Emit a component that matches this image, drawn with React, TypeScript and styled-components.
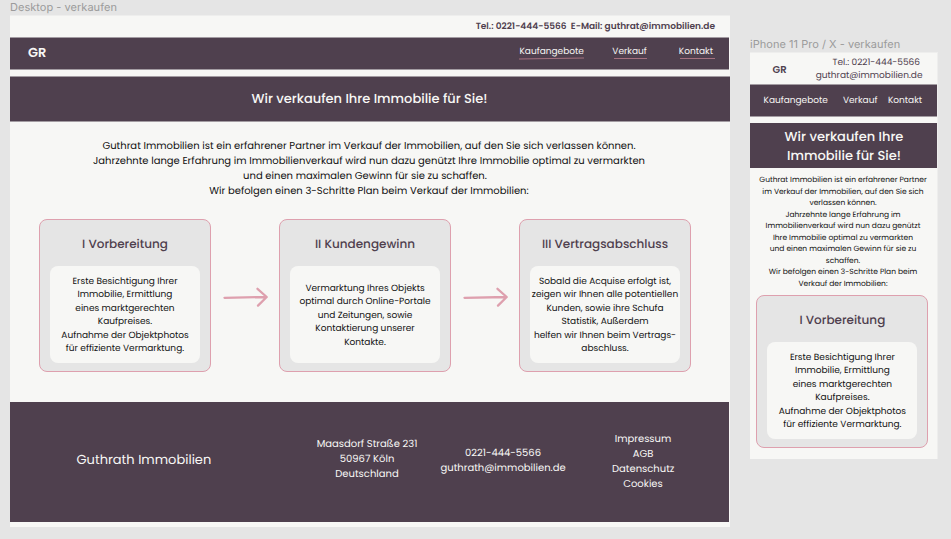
import React from 'react';
import styled, { createGlobalStyle } from 'styled-components';

const color = {
  canvas: '#e5e5e5',
  paper: '#f7f7f5',
  paperEdge: '#eeeeed',
  plum: '#4f404e',
  plumSoft: '#a39ca2',
  rose: '#dea0ae',
  roseDim: '#a3717f',
  ink: '#111111',
  label: '#9b9b9b',
};

const GlobalStyle = createGlobalStyle`
  * { box-sizing: border-box; }
  body {
    margin: 0;
    background: ${color.canvas};
    font-family: Poppins, Inter, sans-serif;
    font-size: 9px;
    line-height: 13.5px;
    color: ${color.ink};
    text-rendering: geometricPrecision;
    -webkit-font-smoothing: antialiased;
  }
`;

const Canvas = styled.div`
  display: flex;
  align-items: flex-start;
  gap: 20px;
  width: 951px;
  height: 539px;
  padding-left: 10px;
  overflow: hidden;
  background: ${color.canvas};
`;

const Artboard = styled.section<{ $width: number; $top: number }>`
  flex: none;
  width: ${(p) => p.$width}px;
  padding-top: ${(p) => p.$top}px;
`;

const ArtboardLabel = styled.div`
  height: 15px;
  font-family: Inter, sans-serif;
  font-size: 11px;
  line-height: 15px;
  letter-spacing: 0.03px;
  color: ${color.label};
  white-space: nowrap;
`;

const Frame = styled.div<{ $height: number }>`
  height: ${(p) => p.$height}px;
  border-top: 1px solid ${color.paperEdge};
  background: ${color.paper};
`;

const ContactBar = styled.div`
  height: 21px;
  padding: 5px 15px 0 0;
  text-align: right;
  font-weight: 600;
  color: ${color.plum};
  white-space: pre;
`;

const NavBar = styled.nav`
  display: flex;
  align-items: center;
  width: 719px;
  height: 33px;
  padding-left: 18px;
  border: solid ${color.plumSoft};
  border-width: 1px 0;
  background: ${color.plum};
  color: ${color.paper};
`;

const Logo = styled.div<{ $size: number; $raise?: number }>`
  padding-bottom: ${(p) => p.$raise ?? 0}px;
  font-size: ${(p) => p.$size}px;
  line-height: 1.5;
  font-weight: 600;
`;

const NavLinks = styled.div`
  display: flex;
  gap: 28.5px;
  margin: 0 6px 1px auto;
`;

const NavLink = styled.a<{ $gapAfter?: number }>`
  position: relative;
  margin-right: ${(p) => p.$gapAfter ?? 0}px;
  white-space: nowrap;
`;

const Underline = styled.svg<{ $left: number }>`
  position: absolute;
  left: ${(p) => p.$left}px;
  top: 10.75px;
  overflow: visible;
  fill: none;
  stroke: ${color.roseDim};
`;

const Banner = styled.h1`
  display: flex;
  align-items: center;
  justify-content: center;
  height: 46px;
  margin: 6px 0 0;
  padding-right: 1px;
  border: solid ${color.plumSoft};
  border-width: 1px 0;
  background: ${color.plum};
  color: ${color.paper};
  font-size: 13px;
  line-height: 19.5px;
  font-weight: 500;
  text-align: center;
`;

const Intro = styled.p`
  height: 60px;
  margin: 16px 0 0;
  padding-right: 2px;
  font-size: 10px;
  line-height: 15px;
  text-align: center;
  white-space: nowrap;
`;

const Steps = styled.div`
  display: flex;
  align-items: center;
  margin: 21px 0 0 29px;
`;

const Card = styled.article`
  flex: none;
  display: flex;
  flex-direction: column;
  align-items: center;
  width: 172px;
  height: 153px;
  padding-top: 15px;
  border: 1px solid ${color.rose};
  border-radius: 8px;
  background: ${color.canvas};
  text-align: center;
`;

const CardTitle = styled.h2`
  height: 19px;
  margin: 0 0 12px;
  font-size: 12px;
  line-height: 19px;
  font-weight: 500;
  color: ${color.plum};
`;

const CardBody = styled.div`
  display: flex;
  align-items: center;
  justify-content: center;
  width: 150px;
  height: 97px;
  padding-top: 3.5px;
  border-radius: 8px;
  background: ${color.paper};
  white-space: nowrap;
`;

const ArrowIcon = styled.svg`
  flex: none;
  margin: 2px 11px 0 12px;
  fill: none;
  stroke: ${color.rose};
  stroke-width: 2.3;
  stroke-linecap: round;
  stroke-linejoin: round;
`;

const Footer = styled.footer`
  display: flex;
  align-items: center;
  width: 719px;
  height: 120px;
  margin-top: 30px;
  padding-left: 66.5px;
  background: ${color.plum};
  color: ${color.paper};
  font-size: 10px;
  line-height: 15px;
  text-align: center;
  white-space: nowrap;
`;

const FooterBlock = styled.div<{ $width: number; $before: number; $raise?: number }>`
  flex: none;
  width: ${(p) => p.$width}px;
  margin-left: ${(p) => p.$before}px;
  padding-bottom: ${(p) => p.$raise ?? 0}px;
`;

const FooterBrand = styled.div`
  flex: none;
  width: 134px;
  padding-bottom: 5px;
  font-size: 13px;
  line-height: 19.5px;
`;

const PhoneFrame = styled(Frame)`
  width: 188px;
  border-right: 1px solid ${color.paperEdge};
`;

const PhoneHeader = styled.header`
  display: flex;
  align-items: center;
  justify-content: space-between;
  height: 31px;
  padding: 3px 14.5px 0 22.5px;
  color: ${color.plum};
`;

const PhoneContact = styled.div`
  padding-top: 0.5px;
  text-align: right;
`;

const PhoneTel = styled.div`
  padding-right: 2.5px;
`;

const PhoneNav = styled.nav`
  display: flex;
  align-items: center;
  height: 33px;
  padding: 2px 0 0 13.5px;
  border: solid ${color.plumSoft};
  border-width: 1px 0;
  background: ${color.plum};
  color: ${color.paper};
`;

const PhoneBanner = styled(Banner)`
  height: 45px;
  padding: 1px 0 0 1px;
  border: 0;
`;

const PhoneIntro = styled.p`
  height: 115px;
  margin: 6px 0 6px;
  padding-right: 1px;
  font-size: 7.5px;
  line-height: 11.5px;
  text-align: center;
  white-space: nowrap;
`;

const PhoneCards = styled.div`
  padding-left: 6.4px;
`;

const Lines = ({ text }: { text: string[] }) => (
  <span>
    {text.map((line, i) => (
      <React.Fragment key={line}>
        {i > 0 && <br />}
        {line}
      </React.Fragment>
    ))}
  </span>
);

const steps = [
  {
    title: 'I Vorbereitung',
    text: [
      'Erste Besichtigung Ihrer',
      'Immobilie, Ermittlung',
      'eines marktgerechten',
      'Kaufpreises.',
      'Aufnahme der Objektphotos',
      'für effiziente Vermarktung.',
    ],
  },
  {
    title: 'II Kundengewinn',
    text: [
      'Vermarktung Ihres Objekts',
      'optimal durch Online-Portale',
      'und Zeitungen, sowie',
      'Kontaktierung unserer',
      'Kontakte.',
    ],
  },
  {
    title: 'III Vertragsabschluss',
    text: [
      'Sobald die Acquise erfolgt ist,',
      'zeigen wir Ihnen alle potentiellen',
      'Kunden, sowie ihre Schufa',
      'Statistik, Außerdem',
      'helfen wir Ihnen beim Vertrags-',
      'abschluss.',
    ],
  },
];

const StepCard = ({ step }: { step: (typeof steps)[number] }) => (
  <Card>
    <CardTitle>{step.title}</CardTitle>
    <CardBody>
      <Lines text={step.text} />
    </CardBody>
  </Card>
);

const Arrow = () => (
  <ArrowIcon width="45" height="20" viewBox="0 0 45 20">
    <path d="M1.5 10.8 L43.5 10 M34.5 1.8 L43.7 10 L35 18.6" />
  </ArrowIcon>
);

export default function App() {
  return (
    <Canvas>
      <GlobalStyle />
      <Artboard $width={720} $top={0}>
        <ArtboardLabel>Desktop - verkaufen</ArtboardLabel>
        <Frame $height={512}>
          <ContactBar>{'Tel.: 0221-444-5566  E-Mail: guthrat@immobilien.de'}</ContactBar>
          <NavBar>
            <Logo $size={13} $raise={2}>GR</Logo>
            <NavLinks>
              <NavLink>
                Kaufangebote
                <Underline $left={0} width="65" height="3">
                  <path d="M0 2 L65 1" />
                </Underline>
              </NavLink>
              <NavLink $gapAfter={3.5}>
                Verkauf
                <Underline $left={2} width="33" height="3">
                  <path d="M0 1.5 H33" />
                </Underline>
              </NavLink>
              <NavLink $gapAfter={10}>
                Kontakt
                <Underline $left={1} width="35" height="3">
                  <path d="M0 1.5 H35" />
                </Underline>
              </NavLink>
            </NavLinks>
          </NavBar>
          <Banner>Wir verkaufen Ihre Immobilie für Sie!</Banner>
          <Intro>
            <Lines
              text={[
                'Guthrat Immobilien ist ein erfahrener Partner im Verkauf der Immobilien, auf den Sie sich verlassen können.',
                'Jahrzehnte lange Erfahrung im Immobilienverkauf wird nun dazu genützt Ihre Immobilie optimal zu vermarkten',
                'und einen maximalen Gewinn für sie zu schaffen.\u00a0\u00a0\u00a0',
                'Wir befolgen einen 3-Schritte Plan beim Verkauf der Immobilien:',
              ]}
            />
          </Intro>
          <Steps>
            <StepCard step={steps[0]} />
            <Arrow />
            <StepCard step={steps[1]} />
            <Arrow />
            <StepCard step={steps[2]} />
          </Steps>
          <Footer>
            <FooterBrand>Guthrath Immobilien</FooterBrand>
            <FooterBlock $width={101} $before={106} $raise={7}>
              <Lines text={['Maasdorf Straße 231', '50967 Köln', 'Deutschland']} />
            </FooterBlock>
            <FooterBlock $width={125} $before={23} $raise={5}>
              <Lines text={['0221-444-5566', 'guthrath@immobilien.de']} />
            </FooterBlock>
            <FooterBlock $width={62} $before={46.5} $raise={2}>
              <Lines text={['Impressum', 'AGB', 'Datenschutz', 'Cookies']} />
            </FooterBlock>
          </Footer>
        </Frame>
      </Artboard>
      <Artboard $width={188} $top={37}>
        <ArtboardLabel>iPhone 11 Pro / X - verkaufen</ArtboardLabel>
        <PhoneFrame $height={407}>
          <PhoneHeader>
            <Logo $size={10} $raise={1}>GR</Logo>
            <PhoneContact>
              <PhoneTel>Tel.: 0221-444-5566</PhoneTel>
              <div>guthrat@immobilien.de</div>
            </PhoneContact>
          </PhoneHeader>
          <PhoneNav>
            <NavLink $gapAfter={15}>Kaufangebote</NavLink>
            <NavLink $gapAfter={10.5}>Verkauf</NavLink>
            <NavLink>Kontakt</NavLink>
          </PhoneNav>
          <PhoneBanner>
            <Lines text={['Wir verkaufen Ihre', 'Immobilie für Sie!']} />
          </PhoneBanner>
          <PhoneIntro>
            <Lines
              text={[
                'Guthrat Immobilien ist ein erfahrener Partner',
                'im Verkauf der Immobilien, auf den Sie sich',
                'verlassen können.',
                'Jahrzehnte lange Erfahrung im',
                'Immobilienverkauf wird nun dazu genützt',
                'Ihre Immobilie optimal zu vermarkten',
                'und einen maximalen Gewinn für sie zu',
                'schaffen.',
                'Wir befolgen einen 3-Schritte Plan beim',
                'Verkauf der Immobilien:',
              ]}
            />
          </PhoneIntro>
          <PhoneCards>
            <StepCard step={steps[0]} />
          </PhoneCards>
        </PhoneFrame>
      </Artboard>
    </Canvas>
  );
}
